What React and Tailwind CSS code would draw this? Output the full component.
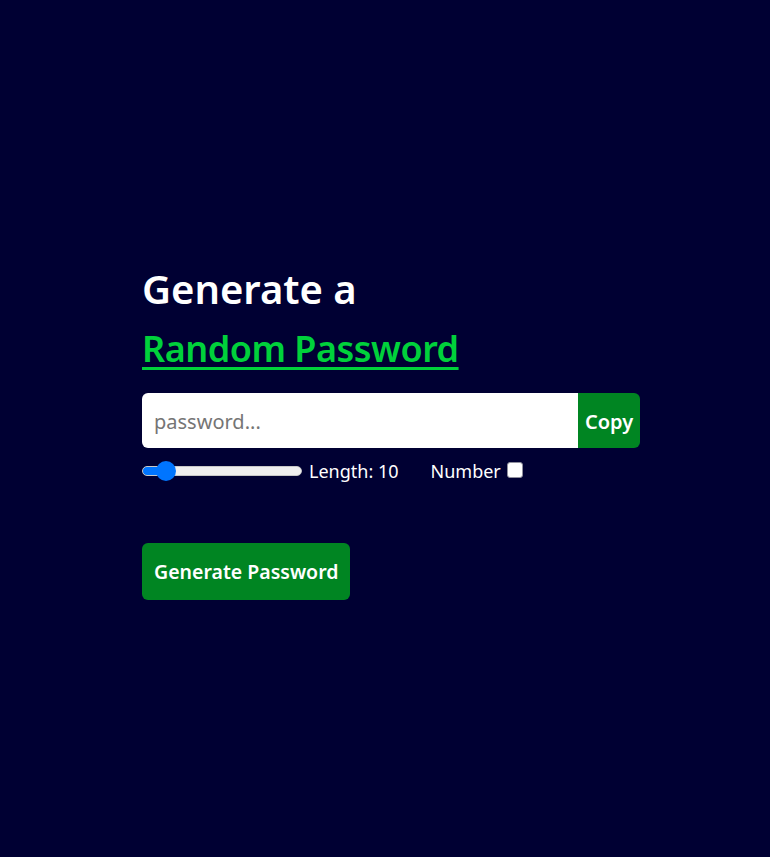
import React, { useState } from "react";

export default function App() {
  const [len, setLen] = useState(10);
  const pct = ((len - 6) / (50 - 6)) * 100;
  return (
    <div
      className="min-h-screen w-full bg-[#000033] flex items-center justify-center"
      style={{ fontFamily: '"Segoe UI", "Noto Sans", "Open Sans", sans-serif' }}
    >
      <div className="w-[510px] pl-3 flex flex-col">
        <h1 className="pt-[1px] text-[40px] leading-[60px] font-semibold text-white">
          Generate a
          <span className="block text-[36px] tracking-[-0.5px] font-semibold text-[#00d13b] underline decoration-[3px] underline-offset-[5px]">
            Random Password
          </span>
        </h1>
        <div className="flex mt-[14px] h-[55px]">
          <input
            type="text"
            placeholder="password..."
            className="flex-1 h-full bg-white rounded-l-md px-3 pt-[3px] text-[20px] text-black placeholder:text-[#757575] outline-none"
          />
          <button className="h-full w-[62px] pt-[3px] bg-[#008522] text-white font-semibold text-[20px] rounded-r-md">
            Copy
          </button>
        </div>
        <div className="flex items-center mt-[11px] h-[24px] text-white text-[18px]">
          <input
            type="range"
            min="6"
            max="50"
            value={len}
            onChange={(e) => setLen(Number(e.target.value))}
            style={{
              background: `linear-gradient(to right, #0075ff 0%, #0075ff ${pct}%, #efefef ${pct}%, #efefef 100%)`,
            }}
            className="w-[160px] h-[10px] m-0 appearance-none rounded-full border border-[#c8c8c8] outline-none cursor-pointer [&::-webkit-slider-thumb]:appearance-none [&::-webkit-slider-thumb]:w-[20px] [&::-webkit-slider-thumb]:h-[20px] [&::-webkit-slider-thumb]:rounded-full [&::-webkit-slider-thumb]:bg-[#0075ff] [&::-webkit-slider-thumb]:border-0"
          />
          <span className="ml-[7px] pt-[2px]">Length: {len}</span>
          <span className="ml-[32px] pt-[2px]">Number</span>
          <input
            type="checkbox"
            className="appearance-none w-[16px] h-[16px] m-0 ml-[6px] -mt-[1px] bg-white border border-[#8f8f9d] rounded-[3px] checked:bg-[#0075ff]"
          />
        </div>
        <div className="mt-[60px]">
          <button className="h-[57px] px-[12px] pt-[2px] bg-[#008522] text-white font-semibold text-[19.5px] rounded-md">
            Generate Password
          </button>
        </div>
      </div>
    </div>
  );
}
